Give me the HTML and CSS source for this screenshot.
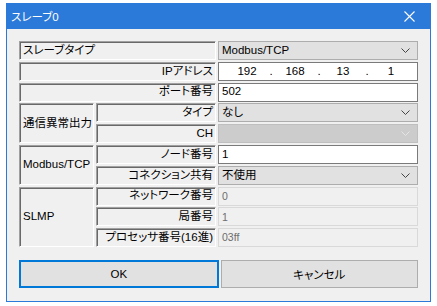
FILE: index.html
```html
<!DOCTYPE html>
<html lang="ja">
<head>
    <meta charset="UTF-8">
    <title>スレーブ0</title>
    <link rel="stylesheet" href="styles.css">
</head>
<body>
<div class="window">
    <div class="titlebar">
        <span class="title">スレーブ0</span>
        <svg class="close" width="11" height="11" viewBox="0 0 11 11">
            <path d="M0.5 0.5 L10.5 10.5 M10.5 0.5 L0.5 10.5" stroke="#fff" stroke-width="1.1" fill="none"/>
        </svg>
    </div>

    <div class="content">
        <div class="grid">
            <!-- スレーブタイプ -->
            <div class="label wide left">スレーブタイプ</div>
            <div class="combo"><span>Modbus/TCP</span><svg class="arrow" width="9" height="5" viewBox="0 0 9 5"><polyline points="0.5,0.5 4.5,4.5 8.5,0.5" fill="none" stroke="#444"/></svg></div>

            <div class="label wide">IPアドレス</div>
            <div class="input ip">
                <span class="seg">192</span><span class="dot">.</span>
                <span class="seg">168</span><span class="dot">.</span>
                <span class="seg">13</span><span class="dot">.</span>
                <span class="seg">1</span>
            </div>

            <div class="label wide">ポート番号</div>
            <div class="input">502</div>

            <!-- 通信異常出力 -->
            <div class="label group rows2">通信異常出力</div>
            <div class="label">タイプ</div>
            <div class="combo"><span>なし</span><svg class="arrow" width="9" height="5" viewBox="0 0 9 5"><polyline points="0.5,0.5 4.5,4.5 8.5,0.5" fill="none" stroke="#444"/></svg></div>
            <div class="label">CH</div>
            <div class="combo disabled"><span></span><svg class="arrow" width="9" height="5" viewBox="0 0 9 5"><polyline points="0.5,0.5 4.5,4.5 8.5,0.5" fill="none" stroke="#e4e4e4"/></svg></div>

            <!-- Modbus/TCP -->
            <div class="label group rows2 latin">Modbus/TCP</div>
            <div class="label">ノード番号</div>
            <div class="input">1</div>
            <div class="label">コネクション共有</div>
            <div class="combo"><span>不使用</span><svg class="arrow" width="9" height="5" viewBox="0 0 9 5"><polyline points="0.5,0.5 4.5,4.5 8.5,0.5" fill="none" stroke="#444"/></svg></div>

            <!-- SLMP -->
            <div class="label group rows3 latin">SLMP</div>
            <div class="label">ネットワーク番号</div>
            <div class="input readonly">0</div>
            <div class="label">局番号</div>
            <div class="input readonly">1</div>
            <div class="label">プロセッサ番号(16進)</div>
            <div class="input readonly">03ff</div>
        </div>

        <div class="buttons">
            <button class="default">OK</button>
            <button>キャンセル</button>
        </div>
    </div>
</div>
</body>
</html>
```

FILE: styles.css
```css
/* ダイアログ */
body {
    margin: 0;
    background-color: #fff;
    font-family: "Liberation Sans", "Noto Sans CJK JP", sans-serif;
    font-size: 11.5px;
    font-feature-settings: "palt";
    color: #000;
}

.window {
    margin: 3px 0 0 6px;
    width: 425px;
    height: 299px;
    box-sizing: border-box;
    border: 1px solid #2b79d8;
    border-top: none;
    background-color: #f0f0f0;
    display: flex;
    flex-direction: column;
}

.titlebar {
    height: 26px;
    background-color: #2b79d8;
    display: flex;
    align-items: center;
    justify-content: space-between;
    padding: 0 15px 0 4px;
    color: #fff;
}

.title {
    font-size: 11.5px;
}

.content {
    padding: 12px 12px 0 12px;
}

.grid {
    display: grid;
    grid-template-columns: 75px 120px 1fr;
    grid-auto-rows: 19px;
    column-gap: 2px;
    row-gap: 1.8px;
    width: 399px;
}

.label {
    box-sizing: border-box;
    border: 1px solid;
    border-color: #a0a0a0 #fff #fff #a0a0a0;
    box-shadow: inset 1px 1px 0 #696969;
    display: flex;
    align-items: center;
    justify-content: flex-end;
    padding: 0 2px 0 3px;
    white-space: nowrap;
    line-height: 1;
}

.label.wide {
    grid-column: 1 / 3;
}

.label.left,
.label.group {
    justify-content: flex-start;
}

.label.group {
    grid-column: 1;
}

.rows2 {
    grid-row: span 2;
}

.rows3 {
    grid-row: span 3;
}

.combo {
    box-sizing: border-box;
    border: 1px solid #adadad;
    background-color: #e1e1e1;
    display: flex;
    align-items: center;
    justify-content: space-between;
    padding: 0 7px 0 3px;
    line-height: 1;
}

.combo.disabled {
    background-color: #cccccc;
    border-color: #bfbfbf;
}

.input {
    box-sizing: border-box;
    border: 1px solid #7a7a7a;
    background-color: #fff;
    display: flex;
    align-items: center;
    padding: 0 3px;
    line-height: 1;
}

.input.readonly {
    background-color: #f0f0f0;
    border-color: #d9d9d9;
    color: #6d6d6d;
    font-size: 10.5px;
}

.ip {
    padding-left: 10px;
}

.ip .seg {
    width: 36px;
    text-align: center;
}

.ip .dot {
    width: 12px;
    text-align: center;
}

.buttons {
    display: flex;
    gap: 2px;
    margin-top: 13px;
    width: 399px;
}

button {
    flex: 1;
    height: 28px;
    box-sizing: border-box;
    background-color: #e1e1e1;
    border: 1px solid #adadad;
    font-family: inherit;
    font-size: 11.5px;
    font-feature-settings: "palt";
    color: #000;
    padding: 0;
}

button.default {
    border: 2px solid #0078d7;
}
```
